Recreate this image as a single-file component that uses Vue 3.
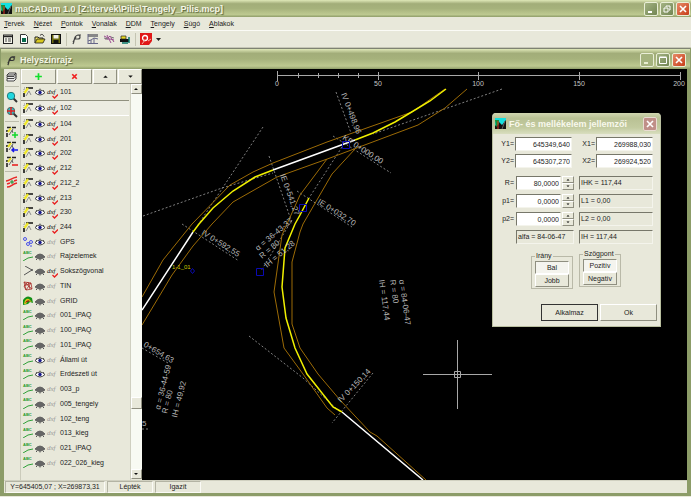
<template>
  <div class="app-window">
    <header class="title-bar">
      <svg class="app-logo" viewBox="0 0 11 11">
        <rect width="11" height="11" fill="#15e0e0" />
        <path d="M0 11V8l4-4 3 3 4-5v9z" fill="#111" />
        <path d="M0 2h4v4L1 9z" fill="#14903a" />
        <path d="M3 3v8" stroke="#e03020" />
        <path d="M7 11l3-8" stroke="#666" />
      </svg>
      <h1>maCADam 1.0 [Z:\tervek\Pilis\Tengely_Pilis.mcp]</h1>
      <div class="window-buttons">
        <button aria-label="Minimize"><svg viewBox="0 0 12 12"><path d="M3 9h4" stroke="#fff" stroke-width="2" /></svg></button>
        <button aria-label="Restore"><svg viewBox="0 0 12 12"><path d="M5 4V3h4v4H8M3 5h4v4H3z" fill="none" stroke="#fff" /></svg></button>
        <button class="close" aria-label="Close"><svg viewBox="0 0 12 12"><path d="M3 3l6 6M9 3l-6 6" stroke="#fff" stroke-width="1.6" /></svg></button>
      </div>
    </header>

    <nav class="menu-bar">
      <a v-for="item in menu" :key="item" href="#"><u>{{ item[0] }}</u>{{ item.slice(1) }}</a>
    </nav>

    <div class="toolbar">
      <button aria-label="Properties">
        <svg viewBox="0 0 12 12"><rect x="1.5" y="2" width="9" height="8.5" fill="#f4f4ea" stroke="#222" /><path d="M1.500 3.500h9" stroke="#222" stroke-width="1.500" /><path d="M3 6h2M6 6h3M3 8h2M6 8h3" stroke="#444" /></svg>
      </button>
      <button aria-label="New">
        <svg viewBox="0 0 12 12"><path d="M2.500 1.500h5l2 2v7h-7z" fill="#fff" stroke="#333" /><rect x="4" y="5" width="4" height="4" fill="#086a4c" /></svg>
      </button>
      <button aria-label="Open">
        <svg viewBox="0 0 12 12"><path d="M1 10V4h3l1 1h4v2" fill="#f4e860" stroke="#222" /><path d="M1 10l2-4h8l-2 4z" fill="#d8c820" stroke="#222" stroke-width=".8" /><path d="M6 2.500c2-2 3-1 4 1" fill="none" stroke="#222" /></svg>
      </button>
      <button aria-label="Save">
        <svg viewBox="0 0 12 12"><rect x="1.500" y="1.500" width="9" height="9" fill="#6c6c10" stroke="#111" /><rect x="3.500" y="2" width="5" height="3.500" fill="#f0f0e8" /><rect x="3.500" y="7" width="5" height="4" fill="#111" /></svg>
      </button>
      <i class="divider"></i>
      <button aria-label="Site plan">
        <svg viewBox="0 0 12 12"><path d="M2 11c2-3 0-8 5-9h3M4 6h3a2 2 0 0 0 0-4M5 4l-3 5" fill="none" stroke="#444" stroke-width="1.200" /></svg>
      </button>
      <button aria-label="Profile">
        <svg viewBox="0 0 12 12"><rect x="1" y="1" width="10" height="3" fill="#888" /><path d="M1 1v10M1 8l3-1 3-2 4 1M4 7v4M7 5v6M1 10.500h10" fill="none" stroke="#668" /></svg>
      </button>
      <button aria-label="Cross section">
        <svg viewBox="0 0 12 12"><path d="M1 3l4 2 2-2 4 6M2 6h5l4 1M4 2l4 8" fill="none" stroke="#9a4d91" /><path d="M1 5l4 1M8 4l3 1" stroke="#777" /></svg>
      </button>
      <button aria-label="Machine">
        <svg viewBox="0 0 12 12"><path d="M1 6h9v3H1z" fill="#111" /><path d="M2 3h5v3H2z" fill="#e8d820" stroke="#222" stroke-width=".7" /><path d="M3 10h6M10 4v6" stroke="#08766a" stroke-width="1.500" /></svg>
      </button>
      <i class="divider"></i>
      <button aria-label="Snap">
        <svg viewBox="0 0 12 12"><path d="M0 0h12v8l-3 4H0z" fill="#e01818" /><circle cx="5" cy="5" r="2.500" fill="none" stroke="#fff" stroke-width="1.300" /><path d="M5 7l-3 4M8 8l3-2" stroke="#f6b0a0" /></svg>
      </button>
      <button class="drop" aria-label="Snap options"><svg viewBox="0 0 12 12"><path d="M4 5h5L6.500 8z" fill="#222" /></svg></button>
    </div>

    <section class="child-window">
      <header class="title-bar child-title">
        <svg class="app-logo" viewBox="0 0 12 12"><path d="M2 11c2-3 0-8 5-9h3M4 6h3a2 2 0 0 0 0-4M5 4l-3 5" fill="none" stroke="#333" stroke-width="1.300" /></svg>
        <h2>Helyszínrajz</h2>
        <div class="window-buttons">
          <button class="dim" aria-label="Minimize"><svg viewBox="0 0 12 12"><path d="M3 9h4" stroke="#e8eed0" stroke-width="2" /></svg></button>
          <button aria-label="Maximize"><svg viewBox="0 0 12 12"><path d="M2.500 3.500h7v6h-7zM2.500 3h7" fill="none" stroke="#fff" /></svg></button>
          <button class="close" aria-label="Close"><svg viewBox="0 0 12 12"><path d="M3 3l6 6M9 3l-6 6" stroke="#fff" stroke-width="1.600" /></svg></button>
        </div>
      </header>

      <div class="workspace">
        <aside class="side-tools">
          <button aria-label="Layers">
            <svg viewBox="0 0 12 12"><path d="M3 2h7l-2 2H1zM1 4v1.500h7l2-2M1 6v1.500h7l2-2M1 8v2h7l2-2V2" fill="#eee" stroke="#333" stroke-width=".9" /></svg>
          </button>
          <i></i>
          <button aria-label="Zoom">
            <svg viewBox="0 0 12 12"><path d="M7 7l4 4" stroke="#333" stroke-width="2" /><circle cx="5" cy="5" r="3.700" fill="#20d8e0" stroke="#267878" /></svg>
          </button>
          <button aria-label="Zoom all">
            <svg viewBox="0 0 12 12"><path d="M7 7l4 4" stroke="#333" stroke-width="2" /><circle cx="5" cy="5" r="3.700" fill="#30c0c8" stroke="#555" /><path d="M5 1v8M1 5h8" stroke="#e02020" stroke-width="1.500" /></svg>
          </button>
          <i></i>
          <button v-for="mark in edits" :key="mark.color" aria-label="Edit axis">
            <svg viewBox="0 0 12 12"><path d="M1 11V4M1 1.500h9" fill="none" stroke="#222" stroke-width="1.600" stroke-dasharray="4 1" /><path d="M2 6l3-4" stroke="#e8e020" stroke-width="2" /><path d="M3 9l4-6M6 4l1 3" stroke="#666" /><path :d="mark.d" fill="none" :stroke="mark.color" stroke-width="1.500" /></svg>
          </button>
          <i></i>
          <button aria-label="Alignment">
            <svg viewBox="0 0 12 12"><path d="M0 5c4 0 5-3 11-4M1 11c4 0 5-3 10-4M1 8l3-1M8 5l3-1" fill="none" stroke="#e82828" stroke-width="1.500" /><path d="M4 6h4M6 4v4" stroke="#138a2a" /></svg>
          </button>
        </aside>

        <aside class="layer-panel">
          <div class="layer-buttons">
            <button class="wide" aria-label="Add"><svg viewBox="0 0 8 8"><path d="M1 4h6M4 1v6" stroke="#12e02c" stroke-width="1.500" /></svg></button>
            <button class="wide" aria-label="Delete"><svg viewBox="0 0 8 8"><path d="M2 2l4 4M6 2L2 6" stroke="#f02020" stroke-width="1.500" /></svg></button>
            <button aria-label="Up"><svg viewBox="0 0 8 8"><path d="M2 5h4L4 3z" fill="#111" /></svg></button>
            <button aria-label="Down"><svg viewBox="0 0 8 8"><path d="M2 3h4L4 5z" fill="#111" /></svg></button>
          </div>
          <div class="layer-body">
            <ul class="layer-list">
              <li v-for="layer in layers" :key="layer.name" :class="{ selected: layer.name === '102' }">
                <svg class="icon" viewBox="0 0 10 10">
                  <g v-if="layer.type === 'axis'"><path d="M1 10V6M3 1h7" fill="none" stroke="#111" stroke-width="1.600" /><path d="M1 5V1h2" fill="none" stroke="#888" stroke-dasharray="1 1" /><path d="M1.500 6l3.500-5" stroke="#f0e828" stroke-width="2.200" /><path d="M3 9l3-5 2 4" fill="none" stroke="#777" stroke-width=".800" /></g>
                  <g v-else-if="layer.type === 'gps'" fill="none" stroke="#4b52e8"><circle cx="2" cy="2" r="1.500" /><circle cx="5" cy="7" r="1.500" /><circle cx="8" cy="5" r="1.500" /><path d="M7 9h2" /></g>
                  <g v-else-if="layer.type === 'poly'" fill="none" stroke="#555"><path d="M2 0l7 4-8 5" /><circle cx="9" cy="4" r=".700" /></g>
                  <g v-else-if="layer.type === 'tin'" fill="none" stroke="#a82c28" stroke-width=".800"><path d="M1 1l7 1 1 6-6 1-2-4 7-3-5 7L1 1l8 7M1 5l4-4 2 7" /></g>
                  <g v-else-if="layer.type === 'grid'"><path d="M0 9V4q4-6 9-2l1 5-3-1-2 2z" fill="#129018" /><path d="M1 8q1-6 5-5l3 3-4-1-2 3z" fill="#d8c818" /><path d="M2 7q2-4 5-2l-3 1z" fill="#a01010" /></g>
                  <path v-else d="M0 10l5-3 5-1" fill="none" stroke="#2da038" />
                </svg>
                <small v-if="layer.type === 'text'" class="abc">ABC</small>
                <svg class="icon" viewBox="0 0 10 10">
                  <g v-if="layer.visible"><path d="M0 5.500q5-5 10 0-5 5-10 0z" fill="#fff" stroke="#333" stroke-width=".900" /><circle cx="5" cy="5.500" r="1.700" fill="#18188c" /><path d="M1 3l1 1M5 1.500v1.500M9 3L8 4" stroke="#333" stroke-width=".700" /></g>
                  <g v-else><path d="M0 6q5-6 10 0-5 4-10 0z" fill="#666" stroke="#555" stroke-width=".800" /><path d="M2 8l-1 1M5 8v1.500M8 8l1 1" stroke="#555" /></g>
                </svg>
                <span class="dxf" :class="{ exported: layer.dxf }">dxf
                  <svg v-if="layer.dxf" viewBox="0 0 6 5"><path d="M.500 2l2 2L6 .500" fill="none" stroke="#e82020" stroke-width="1.300" /></svg>
                </span>
                <span class="name">{{ layer.name }}</span>
              </li>
            </ul>
            <div class="scrollbar">
              <button aria-label="Scroll up"><svg viewBox="0 0 8 8"><path d="M2 5h4L4 3z" fill="#111" /></svg></button>
              <span class="track"></span>
              <span class="thumb"></span>
              <span class="track rest"></span>
              <button aria-label="Scroll down"><svg viewBox="0 0 8 8"><path d="M2 3h4L4 5z" fill="#111" /></svg></button>
            </div>
          </div>
        </aside>

        <main class="drawing">
          <svg class="plan" viewBox="142 69 545 411" preserveAspectRatio="xMinYMin slice">
            <!-- scale -->
            <path class="ruler" d="M277.500 75.500H680.500M277.500 71v10M298.500 73v5M318.500 73v5M338.500 73v5M358.500 73v5M378.500 72v8M478.500 72v8M579.500 72v8M680.500 72v8" />
            <text v-for="mark in scale" :key="mark.label" class="scale" :x="mark.x" y="86">{{ mark.label }}</text>

            <!-- construction lines -->
            <g class="dashed">
              <path d="M143 216L222 188L273 173M263 127L196 228M269 156L292 223M502 89L373 134M336 92L351 133M333 136L391 173" />
              <path d="M342 147L309 198M297 191L352 227M182 224L239 261M292 220L261 271M249 336L303 378L340 412M373 373L332 423M142 348L168 363M142 429H150" />
            </g>

            <!-- road edges -->
            <g class="edge">
              <path d="M142 297L163 260L192 224L230 185L253 172L273 163L327 142L412 112L445 89" />
              <path d="M142 325L172 275L193 246L212 224L233 202L277 177L330 158L418 125L445 108L467 89" />
              <path d="M327 159L300 195L287 224L282 235L274 292L284 348L303 374L327 408L335 415" />
              <path d="M355 149L332 174L303 224L300 232L292 262V324L300 348L318 374L340 400L370 432L377 436L426 480" />
            </g>

            <!-- axes -->
            <path class="straight" d="M142 310L193 232M273 170L355 140M342 412L423 480" />
            <path class="curve" d="M193 232L199 224L213 208L233 191L255 177L273 170M355 140L373 133L395 122L410 113L430 101L446 89M309 198L300 215L295 224L285 248L282 287L286 318L295 348L307 374L333 407L342 412" />

            <text v-for="note in notes" :key="note.text" class="note" :transform="`translate(${note.x} ${note.y}) rotate(${note.angle})`">{{ note.text }}</text>
            <text class="point-label" x="172" y="269">1-1_01</text>

            <path class="node" d="M342.500 141.500h7v7h-7zM299.500 204.500h7v7h-7zM256.500 268.500h7v7h-7zM192.500 268.500l2 2.500-2 2.500-2-2.500z" />
            <path class="cursor" d="M423 374.500h69M457.500 340v69M454.500 371.500h6v6h-6z" />
          </svg>

          <form class="dialog" @submit.prevent>
            <header class="dialog-title">
              <svg class="app-logo" viewBox="0 0 11 11">
                <rect width="11" height="11" fill="#15e0e0" />
                <path d="M0 11V8l4-4 3 3 4-5v9z" fill="#111" />
                <path d="M0 2h4v4L1 9z" fill="#14903a" />
                <path d="M3 3v8" stroke="#e03020" />
                <path d="M7 11l3-8" stroke="#666" />
              </svg>
              <h2>Fő- és mellékelem jellemzői</h2>
              <div class="window-buttons">
                <button type="button" class="close faded" aria-label="Close"><svg viewBox="0 0 12 12"><path d="M3 3l6 6M9 3l-6 6" stroke="#fff" stroke-width="1.600" /></svg></button>
              </div>
            </header>

            <div class="coords">
              <template v-for="field in coords" :key="field.id">
                <label :for="field.id">{{ field.id }}=</label>
                <input :id="field.id" v-model="field.value" type="text">
              </template>
            </div>

            <div class="params">
              <template v-for="param in params" :key="param.id">
                <label :for="param.id">{{ param.id }}=</label>
                <div class="spinner">
                  <input :id="param.id" v-model="param.value" type="text">
                  <div class="arrows">
                    <button type="button" aria-label="Increase"><svg viewBox="0 0 8 5"><path d="M2.500 3.500h3L4 2z" /></svg></button>
                    <button type="button" aria-label="Decrease"><svg viewBox="0 0 8 5"><path d="M2.500 1.500h3L4 3z" /></svg></button>
                  </div>
                </div>
                <output>{{ param.result }}</output>
              </template>
              <output class="alfa">alfa = 84-06-47</output>
              <output>IH = 117,44</output>
            </div>

            <div class="groups">
              <fieldset>
                <legend>Irány</legend>
                <button type="button" class="pressed">Bal</button>
                <button type="button">Jobb</button>
              </fieldset>
              <fieldset class="second">
                <legend>Szögpont</legend>
                <button type="button" class="pressed">Pozitív</button>
                <button type="button">Negatív</button>
              </fieldset>
            </div>

            <div class="actions">
              <button type="submit" class="default">Alkalmaz</button>
              <button type="button">Ok</button>
            </div>
          </form>
        </main>
      </div>

      <footer class="status-bar">
        <span class="position">Y=645405,07 ; X=269873,31</span>
        <span>Lépték</span>
        <span>Igazít</span>
      </footer>
    </section>
  </div>
</template>

<script setup>
import { ref } from 'vue';

const menu = ['Tervek', 'Nézet', 'Pontok', 'Vonalak', 'DDM', 'Tengely', 'Súgó', 'Ablakok'];

const edits = [
  { color: '#12d82c', d: 'M6 9h6M9 6v6' },
  { color: '#1818e8', d: 'M6 9h6M8 7L6 9l2 2' },
  { color: '#e81818', d: 'M6 9h6' },
];

const axis = (name) => ({ name, type: 'axis', visible: true, dxf: true });
const text = (name, visible = false) => ({ name, type: 'text', visible, dxf: false });

const layers = ref([
  ...['101', '102', '104', '201', '202', '212', '212_2', '213', '230', '244'].map(axis),
  { name: 'GPS', type: 'gps', visible: true, dxf: false },
  text('Rajzelemek'),
  { name: 'Sokszögvonal', type: 'poly', visible: false, dxf: true },
  { name: 'TIN', type: 'tin', visible: false, dxf: false },
  { name: 'GRID', type: 'grid', visible: false, dxf: false },
  text('001_iPAQ'),
  text('100_iPAQ'),
  text('101_iPAQ'),
  text('Állami út', true),
  text('Erdészeti út', true),
  text('003_p'),
  text('005_tengely'),
  text('102_teng'),
  text('013_kieg'),
  text('021_iPAQ'),
  text('022_026_kieg'),
]);

const scale = [
  { label: '0', x: 277 },
  { label: '50', x: 378 },
  { label: '100', x: 478 },
  { label: '150', x: 579 },
  { label: '200', x: 679 },
];

const notes = [
  { text: 'IV 0+498,96', x: 341, y: 94, angle: 69 },
  { text: 'KP 0+000,00', x: 342, y: 139, angle: 33 },
  { text: 'IE 0+541,27', x: 280, y: 175, angle: 70 },
  { text: 'IE 0+032,70', x: 317, y: 203, angle: 32 },
  { text: 'IV 0+592,55', x: 201, y: 234, angle: 32 },
  { text: '0+654,63', x: 143, y: 346, angle: 31 },
  { text: 'α = 36-43-37', x: 258, y: 251, angle: -40 },
  { text: 'R = 80', x: 262, y: 259, angle: -40 },
  { text: 'IH = 51,28', x: 267, y: 268, angle: -40 },
  { text: 'α = 84-06-47', x: 399, y: 280, angle: 82 },
  { text: 'R = 80 ', x: 390, y: 280, angle: 82 },
  { text: 'IH = 117,44', x: 379, y: 280, angle: 82 },
  { text: 'α = 36-44-59', x: 160, y: 410, angle: -76 },
  { text: ' R = 80', x: 167, y: 414, angle: -76 },
  { text: 'IH = 49,92', x: 177, y: 418, angle: -76 },
  { text: 'IV 0+150,14', x: 341, y: 403, angle: -46 },
  { text: '5', x: 142, y: 426, angle: 0 },
];

const coords = ref([
  { id: 'Y1', value: '645349,640' },
  { id: 'X1', value: '269988,030' },
  { id: 'Y2', value: '645307,270' },
  { id: 'X2', value: '269924,520' },
]);

const params = ref([
  { id: 'R', value: '80,0000', result: 'IHK = 117,44' },
  { id: 'p1', value: '0,0000', result: 'L1 = 0,00' },
  { id: 'p2', value: '0,0000', result: 'L2 = 0,00' },
]);
</script>

<style>
body {
  margin: 0;
  background: #fff;
}
</style>

<style scoped>
.app-window {
  display: flex;
  flex-direction: column;
  height: 100vh;
  padding-bottom: 1px;
  box-sizing: border-box;
  overflow: hidden;
  background: #e8e8da;
  font: 7px/10px "Liberation Sans", Arial, sans-serif;
  color: #1c1c1c;
}

button,
input {
  box-sizing: border-box;
  margin: 0;
  padding: 0;
  font: inherit;
  color: inherit;
}

button {
  border: 0;
  background: none;
}

svg {
  display: block;
}

/* title bars */
.title-bar {
  display: flex;
  flex: none;
  align-items: center;
  gap: 3px;
  height: 17px;
  padding: 0 1px;
  box-sizing: border-box;
  background: linear-gradient(#dfe8b8, #a2ad79 22%, #a6b27c 50%, #bdc990 85%, #8f9d69);
}

.title-bar h1,
.title-bar h2,
.dialog-title h2 {
  flex: 1;
  margin: 0;
  font-size: 9px;
  line-height: 12px;
  white-space: nowrap;
  color: #f4f6e6;
  text-shadow: 1px 1px 1px #59643c;
}

.app-logo {
  width: 11px;
  height: 11px;
}

.window-buttons {
  display: flex;
  gap: 2px;
}

.window-buttons button {
  width: 14px;
  height: 14px;
  border: 1px solid #e9eed6;
  border-radius: 2px;
  background: linear-gradient(135deg, #a4b383, #728553);
}

.window-buttons .dim {
  background: #a5b37e;
}

.window-buttons .close {
  background: linear-gradient(135deg, #e68a68, #c83c18);
}

.window-buttons .faded {
  border-color: #e9dcd2;
  background: #c08f88;
}

/* menu and toolbar */
.menu-bar {
  display: flex;
  flex: none;
  gap: 9px;
  height: 13px;
  padding-left: 4px;
  line-height: 14px;
  border-bottom: 1px solid #fbfbf6;
}

.menu-bar a {
  color: inherit;
  text-decoration: none;
}

.toolbar {
  display: flex;
  flex: none;
  align-items: center;
  gap: 4px;
  height: 17px;
  padding-left: 2px;
  box-sizing: border-box;
  border-bottom: 1px solid #c6c6b6;
}

.toolbar button,
.toolbar button svg {
  width: 12px;
  height: 12px;
}

.toolbar .drop {
  margin-left: -4px;
}

.divider {
  width: 1px;
  height: 13px;
  background: #c4c4b2;
}

/* child window */
.child-window {
  display: flex;
  flex: 1;
  flex-direction: column;
  min-height: 0;
  border: solid #8c9c68;
  border-width: 0 4px 3px;
}

.child-title {
  height: 21px;
  margin: 0 -3px;
  padding: 2px 4px 0 5px;
  border-top: 1px solid #7e8272;
}

.workspace {
  display: flex;
  flex: 1;
  min-height: 0;
}

.side-tools {
  display: flex;
  flex: none;
  flex-direction: column;
  align-items: center;
  gap: 3px;
  width: 16px;
  padding-top: 2px;
  border-right: 1px solid #cbcbbb;
}

.side-tools button,
.side-tools svg {
  width: 12px;
  height: 12px;
}

.side-tools i {
  width: 14px;
  height: 1px;
  margin-bottom: 1px;
  background: #bdbdac;
}

.layer-panel {
  display: flex;
  flex: none;
  flex-direction: column;
  width: 121px;
}

.layer-buttons {
  display: flex;
  gap: 1px;
  height: 15px;
}

.layer-buttons button {
  display: flex;
  flex: 2;
  align-items: center;
  justify-content: center;
  border: 1px solid;
  border-color: #fff #8f8f80 #8f8f80 #fff;
}

.layer-buttons .wide {
  flex: 3;
}

.layer-buttons svg {
  width: 9px;
  height: 9px;
}

.layer-body {
  display: flex;
  flex: 1;
  min-height: 0;
}

.layer-list {
  display: flex;
  flex: 1;
  flex-direction: column;
  min-width: 0;
  margin: 0;
  padding: 1px 1px 10px 0;
  list-style: none;
}

.layer-list li {
  position: relative;
  display: flex;
  flex: 1;
  align-items: center;
  gap: 2px;
  min-height: 0;
  padding-left: 2px;
  white-space: nowrap;
}

.layer-list .selected {
  border-top: 1px solid #90907f;
  border-bottom: 1px solid #fff;
  background: #ecece2;
}

.icon {
  flex: none;
  width: 10px;
  height: 10px;
}

.abc {
  position: absolute;
  top: 1px;
  left: 2px;
  font-size: 4px;
  font-weight: bold;
  line-height: 6px;
  color: #1f9a2c;
}

.dxf {
  position: relative;
  width: 11px;
  font: italic 7px/8px "Liberation Serif", serif;
  color: #999;
}

.exported {
  color: #111;
}

.dxf svg {
  position: absolute;
  right: 0;
  bottom: -3px;
  width: 6px;
  height: 5px;
}

.scrollbar {
  display: flex;
  flex: none;
  flex-direction: column;
  width: 11px;
  padding-bottom: 1px;
  border-left: 1px solid #cfcfc0;
}

.scrollbar button,
.thumb {
  flex: none;
  height: 10px;
  border: 1px solid;
  border-color: #fff #8f8f80 #8f8f80 #fff;
  background: #e8e8da;
}

.scrollbar svg {
  width: 8px;
  height: 8px;
}

.track {
  flex: 5;
  background: #f8faf3;
}

.rest {
  flex: 1;
}

/* drawing */
.drawing {
  position: relative;
  flex: 1;
  min-width: 0;
  overflow: hidden;
  background: #000;
}

.plan {
  width: 100%;
  height: 100%;
}

.plan path {
  fill: none;
}

.ruler,
.cursor {
  stroke: #a8a8a8;
}

.dashed {
  stroke: #a0a0a0;
  stroke-dasharray: 2 2;
  stroke-width: 0.8;
}

.edge {
  stroke: #9c6b06;
}

.straight {
  stroke: #fff;
  stroke-width: 1.5;
}

.curve {
  stroke: #f0f000;
  stroke-width: 1.5;
}

.node {
  stroke: #0a0ab4;
}

.scale {
  font-size: 7px;
  fill: #c4c4c4;
  text-anchor: middle;
}

.note {
  font-size: 8px;
  fill: #b8b8b8;
}

.point-label {
  font-size: 6px;
  fill: #c8c800;
}

/* properties dialog */
.dialog {
  position: absolute;
  top: 44px;
  right: 26px;
  width: 169px;
  padding-bottom: 5px;
  box-sizing: border-box;
  border: solid #b9bf9f;
  border-width: 0 1px 1px;
  border-radius: 4px 4px 0 0;
  background: #e8e8da;
  overflow: hidden;
}

.dialog-title {
  display: flex;
  align-items: center;
  gap: 3px;
  height: 21px;
  padding: 0 3px 0 2px;
  background: linear-gradient(#d0d6b0, #b9c194 25%, #c3cba0 70%, #d9debf);
}

.dialog-title h2 {
  color: #f8f8ec;
  text-shadow: none;
}

.coords {
  display: grid;
  grid-template-columns: 20px 57px 22px 57px;
  gap: 3px 1px;
  align-items: center;
  padding: 3px 0 0 1px;
}

.coords label,
.params label {
  text-align: right;
}

.dialog input,
.dialog output {
  box-sizing: border-box;
  width: 100%;
  min-width: 0;
  height: 14px;
  border: 1px solid;
  border-color: #77776a #f4f4ec #f4f4ec #77776a;
}

.dialog input {
  padding-right: 1px;
  background: #fff;
  text-align: right;
}

.dialog output {
  padding-left: 1px;
  line-height: 12px;
  white-space: nowrap;
}

.params {
  display: grid;
  grid-template-columns: 20px 58px 74px;
  column-gap: 2px;
  row-gap: 4px;
  align-items: center;
  padding: 8px 0 0 1px;
}

.params output {
  margin-left: 3px;
}

.params .alfa {
  grid-column: 2;
  margin-left: 0;
}

.spinner {
  display: flex;
  gap: 1px;
}

.arrows {
  display: flex;
  flex: none;
  flex-direction: column;
  width: 12px;
}

.arrows button {
  height: 7px;
  border: 1px solid;
  border-color: #fff #8f8f80 #8f8f80 #fff;
}

.arrows svg {
  width: 8px;
  height: 5px;
  margin: auto;
}

.groups {
  display: flex;
  gap: 6px;
  padding: 5px 0 0 38px;
}

fieldset {
  display: flex;
  flex-direction: column;
  width: 42px;
  height: 38px;
  margin: 2px 0 0;
  padding: 0 3px;
  box-sizing: border-box;
  border: 1px solid #b9b9a8;
}

.second {
  margin: 0 0 2px;
}

legend {
  padding: 0 1px;
  line-height: 10px;
}

fieldset button {
  height: 13px;
  border: 1px solid;
  border-color: #fff #8f8f80 #8f8f80 #fff;
}

fieldset .pressed {
  border-color: #8f8f80 #fff #fff #8f8f80;
  background: #f4f4ee;
}

.actions {
  display: flex;
  justify-content: flex-end;
  gap: 2px;
  padding: 15px 3px 0 0;
}

.actions button {
  width: 57px;
  height: 17px;
  border: 1px solid;
  border-color: #fff #8f8f80 #8f8f80 #fff;
}

.actions .default {
  border-color: #333;
}

/* status bar */
.status-bar {
  display: flex;
  flex: none;
  gap: 2px;
  height: 13px;
  padding-left: 1px;
  box-sizing: border-box;
  border-top: 1px solid #d0d0c0;
  background: #e8e8da;
}

.status-bar span {
  width: 46px;
  box-sizing: border-box;
  border: 1px solid;
  border-color: #b4b4a4 #fbfbf6 #fbfbf6 #b4b4a4;
  text-align: center;
}

.status-bar .position {
  width: 100px;
}
</style>
